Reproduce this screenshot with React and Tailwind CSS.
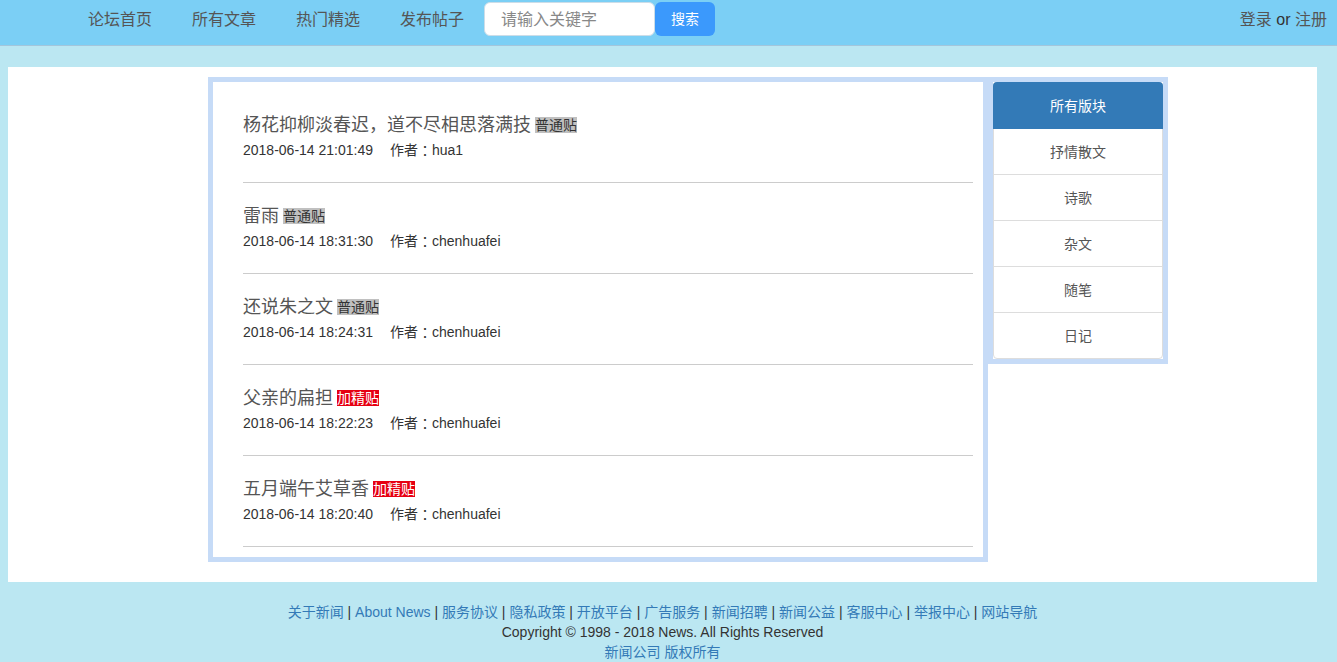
import React from 'react';

const NAV_LINKS = ['论坛首页', '所有文章', '热门精选', '发布帖子'];

const POSTS = [
  { title: '杨花抑柳淡春迟\uFF0C道不尽相思落满技', time: '2018-06-14 21:01:49', author: 'hua1', featured: false },
  { title: '雷雨', time: '2018-06-14 18:31:30', author: 'chenhuafei', featured: false },
  { title: '还说朱之文', time: '2018-06-14 18:24:31', author: 'chenhuafei', featured: false },
  { title: '父亲的扁担', time: '2018-06-14 18:22:23', author: 'chenhuafei', featured: true },
  { title: '五月端午艾草香', time: '2018-06-14 18:20:40', author: 'chenhuafei', featured: true },
];

const BOARDS = ['所有版块', '抒情散文', '诗歌', '杂文', '随笔', '日记'];

const FOOTER_LINKS = [
  '关于新闻',
  'About News',
  '服务协议',
  '隐私政策',
  '开放平台',
  '广告服务',
  '新闻招聘',
  '新闻公益',
  '客服中心',
  '举报中心',
  '网站导航',
];

function Header() {
  return (
    <header className="flex h-[46px] items-start justify-between border-b border-[#a3c6dc] bg-[#7bcff5] pt-0.5 text-base">
      <div className="flex items-start pl-[68px]">
        <nav className="flex">
          {NAV_LINKS.map((label) => (
            <a key={label} href="#" className="px-5 leading-9 text-[#555]">{label}</a>
          ))}
        </nav>
        <form className="flex" onSubmit={(e) => e.preventDefault()}>
          <input
            type="text"
            aria-label="请输入关键字"
            placeholder="请输入关键字"
            className="h-[34px] w-[171px] rounded-md border border-[#ccdde8] bg-white px-4 pt-0.5 outline-none placeholder:text-[#888]"
          />
          <button type="submit" className="h-[34px] w-[60px] rounded-md bg-[#3b99fc] text-sm text-white">搜索</button>
        </form>
      </div>
      <div className="pr-2.5 leading-9">
        <a href="#" className="text-[#555]">登录</a> or <a href="#" className="text-[#555]">注册</a>
      </div>
    </header>
  );
}

function Post({ post }) {
  return (
    <li className="border-b border-[#ccc] pt-5 pb-[22px]">
      <div className="mb-0.5 flex h-[26px] items-center gap-1">
        <a href="#" className="text-lg text-[#555]">{post.title}</a>
        <span className={`leading-4 ${post.featured ? 'bg-[#e60012] text-white' : 'bg-[#c0c0c0]'}`}>
          {post.featured ? '加精贴' : '普通贴'}
        </span>
      </div>
      <div className="flex">
        <time className="w-[147px]">{post.time}</time>
        <span className="flex">
          作者<span className="font-['Noto_Sans_CJK_TC',sans-serif]">{'\uFF1A'}</span>{post.author}
        </span>
      </div>
    </li>
  );
}

function BoardList() {
  return (
    <aside className="w-[180px] border-[5px] border-[#c6dbf7]">
      <ul className="divide-y divide-[#ddd] rounded border border-[#ddd] text-center">
        {BOARDS.map((board, i) => (
          <li key={board}>
            <a
              href="#"
              className={`block ${i === 0 ? '-m-px rounded-t bg-[#337ab7] pt-3.5 pb-[13px] text-white' : 'pt-[13px] pb-3 text-[#555]'}`}
            >
              {board}
            </a>
          </li>
        ))}
      </ul>
    </aside>
  );
}

export default function App() {
  return (
    <div className="min-h-screen bg-[#bbe7f2] font-['Liberation_Sans','Noto_Sans_CJK_SC',sans-serif] text-sm leading-5 text-[#333]">
      <Header />

      <div className="mr-5 ml-2 pt-[21px]">
        <main className="flex items-start bg-white pt-2.5 pb-5 pl-[200px]">
          <section className="w-[780px] border-[5px] border-[#c6dbf7] py-2.5 pr-2.5 pl-[30px]">
            <ul>
              {POSTS.map((post) => (
                <Post key={post.time} post={post} />
              ))}
            </ul>
          </section>
          <BoardList />
        </main>

        <footer className="pt-5 text-center">
          <p>
            {FOOTER_LINKS.map((label, i) => (
              <React.Fragment key={label}>
                {i > 0 && ' | '}
                <a href="#" className="text-[#337ab7]">{label}</a>
              </React.Fragment>
            ))}
          </p>
          <p>Copyright © 1998 - 2018 News. All Rights Reserved</p>
          <p>
            <a href="#" className="text-[#337ab7]">新闻公司 版权所有</a>
          </p>
        </footer>
      </div>
    </div>
  );
}
